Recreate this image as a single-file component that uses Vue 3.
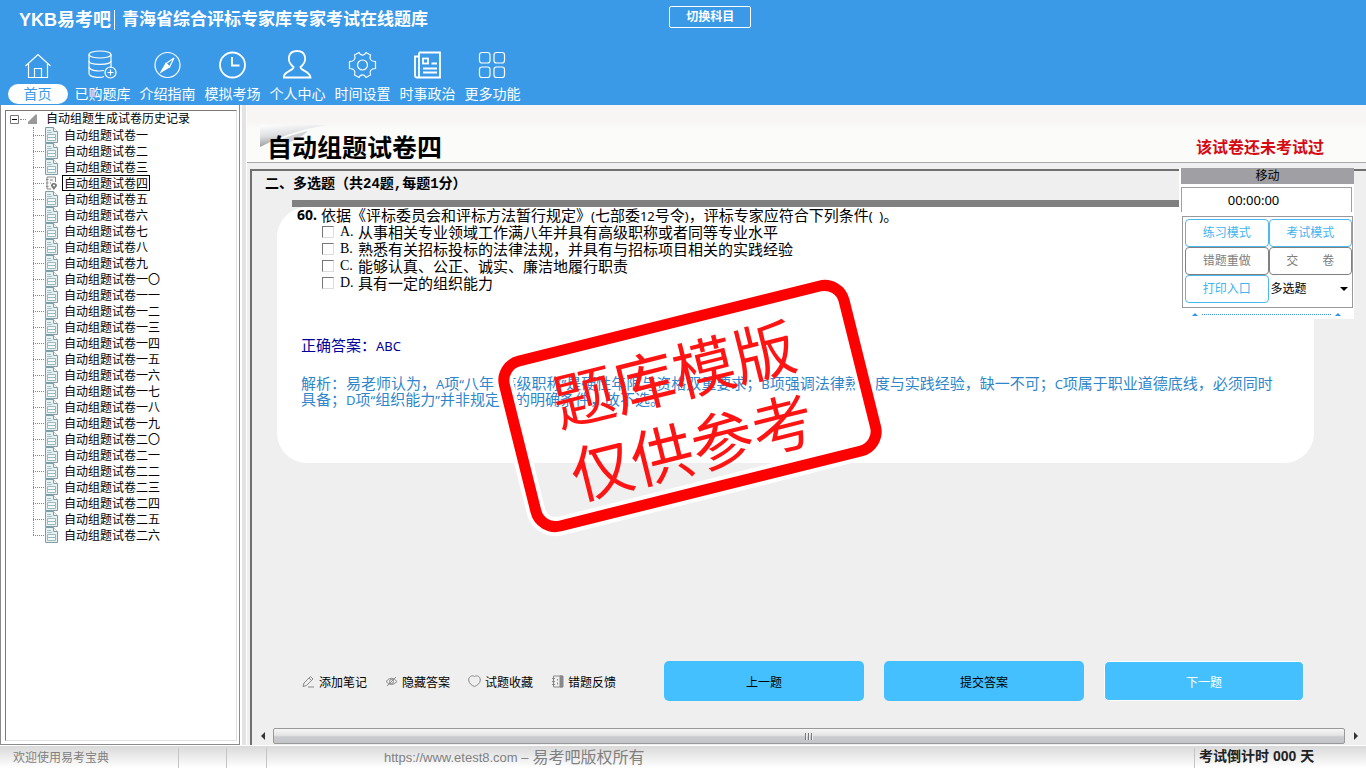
<script setup>
import { ref } from 'vue'

const navItems = [
  { id: 'home', label: '首页' },
  { id: 'bank', label: '已购题库' },
  { id: 'guide', label: '介绍指南' },
  { id: 'mock', label: '模拟考场' },
  { id: 'user', label: '个人中心' },
  { id: 'time', label: '时间设置' },
  { id: 'news', label: '时事政治' },
  { id: 'more', label: '更多功能' }
]
const activeNav = ref('home')

const numerals = [
  '一', '二', '三', '四', '五', '六', '七', '八', '九', '一〇', '一一', '一二', '一三',
  '一四', '一五', '一六', '一七', '一八', '一九', '二〇', '二一', '二二', '二三', '二四', '二五', '二六'
]
const selectedPaper = ref('四')

const options = [
  { key: 'A', text: '从事相关专业领域工作满八年并具有高级职称或者同等专业水平' },
  { key: 'B', text: '熟悉有关招标投标的法律法规，并具有与招标项目相关的实践经验' },
  { key: 'C', text: '能够认真、公正、诚实、廉洁地履行职责' },
  { key: 'D', text: '具有一定的组织能力' }
]
const checked = ref([])
const kind = ref('多选题')
</script>

<template>
  <div class="app">
    <header class="top">
      <div class="brand-row">
        <div class="brand">
          <span class="logo">YKB易考吧</span>
          <h1 class="site">青海省综合评标专家库专家考试在线题库</h1>
        </div>
        <button class="switch" type="button">切换科目</button>
      </div>
      <nav class="nav">
        <button
          v-for="n in navItems"
          :key="n.id"
          type="button"
          class="nav-item"
          :class="{ active: activeNav === n.id }"
          @click="activeNav = n.id"
        >
          <svg class="nav-icon" viewBox="0 0 30 30" width="30" height="30" aria-hidden="true">
            <g v-if="n.id === 'home'">
              <path d="M2.5 16 L15 4.500 L27.500 16" />
              <path d="M5.500 14 V27.500 H24.500 V14" />
              <path d="M11.500 27 V18.500 H18.500 V27" />
            </g>
            <g v-else-if="n.id === 'bank'">
              <ellipse cx="12" cy="4.500" rx="11" ry="3.500" />
              <path d="M1 4.500 V23 C1 28 13 28 16 26.500 M23 4.500 V18" />
              <path d="M1 11 C1 15.500 23 15.500 23 11 M1 17 C2 21 11 21.500 16 20.500" />
              <circle cx="22.500" cy="22.500" r="5.500" />
              <path d="M19.500 22.500 H25.500 M22.500 19.500 V25.500" />
            </g>
            <g v-else-if="n.id === 'guide'">
              <circle cx="14.500" cy="15" r="12.500" />
              <path d="M21 8 L16.500 17 L13 13.500 Z" />
              <path class="solid" d="M8 22 L13 13.500 L16.500 17 Z" />
            </g>
            <g v-else-if="n.id === 'mock'" class="medium">
              <circle cx="14.500" cy="15" r="12.500" />
              <path d="M14 7 V15.500 H21.500" />
            </g>
            <g v-else-if="n.id === 'user'" class="medium">
              <path d="M10.500 17 C3 11 5 1 14 1 C23 1 25 11 17.500 17 C17 20.500 27 21 27.500 27.500 H.5 C1 21 11 20.500 10.500 17 Z" />
            </g>
            <g v-else-if="n.id === 'time'">
              <path d="M11 2.500 C12.500 6 16.500 6 18 2.500 L22.500 5 C21 9 23 11.500 27.500 11.500 V18.500 C23 18.500 21 21 22.500 25 L18 27.500 C16.500 24 12.500 24 11 27.500 L6.500 25 C8 21 6 18.500 1.500 18.500 V11.500 C6 11.500 8 9 6.500 5 Z" />
              <circle cx="14.500" cy="15" r="5" />
            </g>
            <g v-else-if="n.id === 'news'" class="medium">
              <path d="M6 2.500 H27 V27.500 H4 Q2 27.500 2 25 V6.500 H6 M6 2.500 V27" />
              <rect x="10" y="8.500" width="5" height="5" />
              <path d="M18.500 13.500 H24 M10 18.500 H24 M10 22.500 H24" />
            </g>
            <g v-else>
              <rect x="1.500" y="2.500" width="10.500" height="10.500" rx="2.500" />
              <rect x="16" y="2.500" width="10.500" height="10.500" rx="2.500" />
              <rect x="1.500" y="17" width="10.500" height="10.500" rx="2.500" />
              <rect x="16" y="17" width="10.500" height="10.500" rx="2.500" />
            </g>
          </svg>
          <span class="nav-label">{{ n.label }}</span>
        </button>
      </nav>
    </header>

    <main class="body">
      <aside class="side">
        <div class="tree">
          <div class="root">
            <button class="toggle" type="button" aria-label="折叠">
              <svg viewBox="0 0 9 9" width="9" height="9"><path d="M.5 .5 H8.500 V8.500 H.5 Z" fill="#fff" stroke="#777" /><path d="M2 4.500 H7" stroke="#000" /></svg>
            </button>
            <span class="dots"></span>
            <svg class="root-icon" viewBox="0 0 10 10" width="10" height="10" aria-hidden="true"><path d="M0 8 L7 1 Q9 -1 9 2 V10 H1 Q-1 10 0 8 Z" fill="#999" /></svg>
            <span>自动组题生成试卷历史记录</span>
          </div>
          <ul class="papers">
            <li v-for="n in numerals" :key="n" class="paper">
              <svg v-if="n === '四'" class="doc" viewBox="0 0 14 16" width="14" height="16" aria-hidden="true">
                <path d="M11.500 7 V2 H3 V14 H7" fill="#f8f8f8" stroke="#888" />
                <path d="M2 4.500 H4.500 M2 8 H4.500 M2 11.500 H4.500 M6 5 H9 M6 8 H7" stroke="#888" />
                <path d="M9.800 15 L7 11 Q7 8 9.800 8 Q13 8 13 11 Z" fill="#777" />
                <circle cx="10" cy="10.500" r="1" fill="#fff" />
              </svg>
              <svg v-else class="doc" viewBox="0 0 14 16" width="14" height="16" aria-hidden="true">
                <path d="M1.500 .5 H9.500 L13.500 4.500 V15.500 H1.500 Z" fill="#e6f1f2" stroke="#7f9ea3" />
                <path d="M9.500 .5 V4.500 H13.500" fill="#fff" stroke="#7f9ea3" />
                <path d="M3 3.500 H7 M3 5.500 H8" stroke="#a3bfc3" />
                <path d="M3.500 7.500 H11.500 V13.500 H3.500 Z M3.500 10.500 H11.500" fill="#f4fafa" stroke="#9ab9be" />
              </svg>
              <button type="button" class="paper-btn" :class="{ selected: selectedPaper === n }" @click="selectedPaper = n">自动组题试卷{{ n }}</button>
            </li>
          </ul>
        </div>
      </aside>

      <section class="work">
        <div class="title-bar">
          <svg class="swoosh" viewBox="0 0 66 36" width="66" height="36" aria-hidden="true">
            <defs>
              <linearGradient id="fold" x1="0" y1="0" x2="0.300" y2="1">
                <stop offset="0" stop-color="#ffffff" />
                <stop offset="0.500" stop-color="#dcdee0" />
                <stop offset="1" stop-color="#8f9498" />
              </linearGradient>
            </defs>
            <path d="M0 0 H40 L66 0 Q30 6 0 22 Z" fill="url(#fold)" />
            <path d="M12 18 Q30 10 48 6 Q40 14 22 20 Z" fill="#d0d3d6" />
          </svg>
          <h2 class="paper-title">自动组题试卷四</h2>
          <strong class="status">该试卷还未考试过</strong>
        </div>

        <div class="frame">
          <div class="content">
            <h3 class="section">二、多选题（共24题,每题1分）</h3>
            <div class="bar"></div>
            <article class="card">
              <p class="question"><b class="no">60.</b><span>依据《评标委员会和评标方法暂行规定》<span class="latin">(</span>七部委<span class="latin">12</span>号令<span class="latin">)</span>，评标专家应符合下列条件<span class="latin">(&nbsp; )</span>。</span></p>
              <div class="options">
                <label v-for="o in options" :key="o.key" class="option">
                  <input v-model="checked" type="checkbox" :value="o.key" />
                  <span class="key">{{ o.key }}.</span>
                  <span>{{ o.text }}</span>
                </label>
              </div>
              <p class="answer">正确答案：<span class="latin">ABC</span></p>
              <p class="analysis">解析：易老师认为，<span class="latin">A</span>项<span class="latin">“</span>八年<span class="latin">+</span>高级职称<span class="latin">”</span>是硬性年限与资格双重要求；<span class="latin">B</span>项强调法律熟悉度与实践经验，缺一不可；<span class="latin">C</span>项属于职业道德底线，必须同时<br />具备；<span class="latin">D</span>项<span class="latin">“</span>组织能力<span class="latin">”</span>并非规定中的明确条件，故不选。</p>
            </article>

            <div class="actions">
              <div class="tools">
                <button type="button" class="tool">
                  <svg viewBox="0 0 13 13" width="13" height="13" aria-hidden="true"><path d="M1 11.500 L2 8 L8.500 1.500 L11 4 L4.500 10.500 Z M7 3 L9.500 5.500 M6 12 H12" /></svg>
                  添加笔记
                </button>
                <button type="button" class="tool">
                  <svg viewBox="0 0 13 13" width="13" height="13" aria-hidden="true"><path d="M1 6.500 Q6.500 0 12 6.500 Q6.500 12.500 1 6.500 Z M2 11 L11 2" /><circle cx="6.500" cy="6.500" r="2" /></svg>
                  隐藏答案
                </button>
                <button type="button" class="tool">
                  <svg viewBox="0 0 13 13" width="13" height="13" aria-hidden="true"><path d="M6.500 1.500 C9 -.2 12.300 1.500 12.300 5 C12.300 8.500 9 10.500 6.500 11.500 C4 10.500 .7 8.500 .7 5 C.7 1.500 4 -.2 6.500 1.500 Z" /></svg>
                  试题收藏
                </button>
                <button type="button" class="tool">
                  <svg viewBox="0 0 13 13" width="13" height="13" aria-hidden="true"><path d="M2.500 1 H11.500 V12 H2.500 Z M1 3.500 H4 M1 6.500 H4 M1 9.500 H4 M6.500 4 V5.500 M6.500 7.500 V9.500" /><path d="M9 1 H12 V12 H9 Z" fill="#888" /></svg>
                  错题反馈
                </button>
              </div>
              <div class="steps">
                <button type="button" class="step">上一题</button>
                <button type="button" class="step">提交答案</button>
                <button type="button" class="step next">下一题</button>
              </div>
            </div>

            <svg class="stamp" viewBox="-200 -140 400 280" width="400" height="280" role="img" aria-label="题库模版 仅供参考">
              <g transform="rotate(-14)">
                <rect x="-175" y="-85" width="350" height="170" rx="20" fill="none" stroke="#fff" stroke-width="19" />
                <rect x="-175" y="-85" width="350" height="170" rx="20" fill="none" stroke="#f00" stroke-width="11" />
                <text x="-8" y="-11" text-anchor="middle">题库模版</text>
                <text x="-8" y="64" text-anchor="middle">仅供参考</text>
              </g>
            </svg>
          </div>

          <div class="hscroll">
            <button type="button" class="arrow" aria-label="向左"><svg viewBox="0 0 6 8" width="6" height="8"><path d="M5 0 V8 L1 4 Z" fill="#333" /></svg></button>
            <div class="thumb"><i></i><i></i><i></i></div>
            <button type="button" class="arrow" aria-label="向右"><svg viewBox="0 0 6 8" width="6" height="8"><path d="M1 0 V8 L5 4 Z" fill="#333" /></svg></button>
          </div>
        </div>

        <div class="float">
          <div class="handle">移动</div>
          <div class="clock">00:00:00</div>
          <div class="modes">
            <button type="button" class="mode">练习模式</button>
            <button type="button" class="mode">考试模式</button>
            <button type="button" class="mode grey">错题重做</button>
            <button type="button" class="mode grey spread"><span>交</span><span>卷</span></button>
            <button type="button" class="mode">打印入口</button>
            <div class="kind">
              <select v-model="kind" aria-label="题型">
                <option>多选题</option>
                <option>单选题</option>
              </select>
              <svg class="caret" viewBox="0 0 8 4" width="8" height="4" aria-hidden="true"><path d="M0 0 H8 L4 4 Z" /></svg>
            </div>
          </div>
          <div class="fold-row">
            <svg viewBox="0 0 6 3" width="6" height="3"><path d="M0 3 L3 0 L6 3 Z" fill="#2f95e6" /></svg>
            <span></span>
            <svg viewBox="0 0 6 3" width="6" height="3"><path d="M0 3 L3 0 L6 3 Z" fill="#2f95e6" /></svg>
          </div>
        </div>
      </section>
    </main>

    <footer class="foot">
      <span class="cell welcome">欢迎使用易考宝典</span>
      <span class="cell"></span>
      <span class="cell"></span>
      <span class="cell copy"><span class="url">https://www.etest8.com –</span>易考吧版权所有</span>
      <strong class="cell count">考试倒计时 000 天</strong>
    </footer>
  </div>
</template>

<style>
body {
  margin: 0;
  overflow: hidden;
}
</style>

<style scoped>
.app {
  display: flex;
  flex-direction: column;
  height: 100vh;
  background: #efefef;
  color: #000;
  font-family: "Liberation Sans", "Noto Sans CJK SC", sans-serif;
  font-size: 12px;
}
.app * {
  box-sizing: border-box;
}
button,
select {
  font: inherit;
  color: inherit;
  padding: 0;
  margin: 0;
  border: 0;
  background: none;
}
h1, h2, h3, p, ul {
  margin: 0;
  padding: 0;
}

/* header */
.top {
  height: 105px;
  flex: none;
  background: #3a9ae8;
  color: #fff;
}
.brand-row {
  display: grid;
  grid-template-columns: 49% auto 1fr;
  align-items: start;
  height: 50px;
  padding-top: 6px;
}
.brand {
  display: flex;
  align-items: center;
  padding: 4px 0 0 19px;
  white-space: nowrap;
}
.logo {
  font-size: 18px;
  font-weight: 700;
  line-height: 20px;
  padding-right: 3px;
  border-right: 1px solid #fff;
}
.site {
  padding-left: 7px;
  font-size: 17px;
  font-weight: 700;
  line-height: 20px;
}
.switch {
  width: 82px;
  height: 22px;
  border: 1px solid #fff;
  border-radius: 2px;
  font-weight: 700;
  line-height: 20px;
}
.nav {
  display: flex;
  padding-left: 5px;
}
.nav-item {
  width: 65px;
  display: flex;
  flex-direction: column;
  align-items: center;
  gap: 4px;
}
.nav-icon {
  fill: none;
  stroke: #fff;
  stroke-width: 1.2;
}
.medium {
  stroke-width: 1.8;
}
.solid {
  fill: #fff;
}
.nav-label {
  font-size: 14px;
  line-height: 20px;
  white-space: nowrap;
}
.active .nav-label {
  width: 60px;
  border-radius: 10px;
  background: #fff;
  color: #3a9ae8;
}

/* tree */
.body {
  flex: 1;
  display: flex;
  min-height: 0;
}
.side {
  width: 240px;
  flex: none;
  padding: 5px 2px 3px 4px;
  background: #fff;
  border: 1px solid #8b8b8b;
  border-top: 0;
}
.tree {
  height: 100%;
  border: 1px solid #e0e0e0;
  border-top-color: #7b7b7b;
  border-left-color: #7b7b7b;
  line-height: 18px;
}
.root {
  display: flex;
  align-items: center;
  height: 16px;
  padding-left: 4px;
}
.toggle {
  display: flex;
}
.dots {
  width: 6px;
  margin: 0 2px 0 1px;
  border-top: 1px dotted #888;
}
.root-icon {
  margin-right: 8px;
}
.papers {
  list-style: none;
  margin-left: 27px;
  position: relative;
}
.papers::before {
  content: "";
  position: absolute;
  left: 0;
  top: 0;
  bottom: 8px;
  border-left: 1px dotted #888;
}
.paper {
  display: flex;
  align-items: center;
  height: 16px;
}
.paper::before {
  content: "";
  width: 11px;
  border-top: 1px dotted #888;
}
.doc {
  fill: none;
  margin-right: 4px;
}
.paper-btn {
  height: 16px;
  padding: 1px 1px 0;
  border: 1px solid transparent;
  line-height: 14px;
  white-space: nowrap;
}
.paper-btn.selected {
  border-color: #000;
}

/* workspace */
.work {
  flex: 1;
  min-width: 0;
  position: relative;
  display: flex;
  flex-direction: column;
  padding-left: 7px;
  background: linear-gradient(90deg, #fff 0 2px, #e3e3e3 2px 6px, #fff 6px 7px, #efefef 7px);
}
.title-bar {
  position: relative;
  display: flex;
  justify-content: space-between;
  align-items: center;
  height: 58px;
  padding: 29px 42px 0 20px;
  background: linear-gradient(#f7f6f5 0 17px, #fbfbf9 24px 100%);
  border-bottom: 1px solid #a9a9ab;
}
.swoosh {
  position: absolute;
  left: 13px;
  top: 20px;
}
.paper-title {
  position: relative;
  font-size: 25px;
  line-height: 28px;
  font-weight: 700;
}
.status {
  font-size: 16px;
  line-height: 26px;
  color: #d60a12;
}
.frame {
  flex: 1;
  min-height: 0;
  display: flex;
  flex-direction: column;
  margin: 6px 0 0 3px;
  border-top: 2px solid #6f6f6f;
  border-left: 2px solid #6f6f6f;
}
.content {
  flex: 1;
  position: relative;
  display: flex;
  flex-direction: column;
  padding-top: 5px;
}
.section {
  padding-left: 13px;
  font-family: "Liberation Mono", "Noto Sans CJK SC", monospace;
  font-size: 14px;
  line-height: 16px;
}
.bar {
  height: 7px;
  margin: 8px 62px 0 40px;
  background: #808080;
}
.card {
  margin: 0 52px 0 25px;
  padding: 0 20px 56px;
  border-radius: 30px;
  background: #fff;
  font-family: "Noto Sans", "Noto Sans CJK SC", sans-serif;
  font-size: 15px;
}
.latin {
  font-size: 13px;
  line-height: 12px;
}
.question {
  display: flex;
  gap: 4px;
  line-height: 16px;
}
.no {
  font-size: 14px;
}
.options {
  padding-left: 25px;
}
.option {
  display: flex;
  align-items: center;
  width: max-content;
  height: 17px;
}
.option input {
  appearance: none;
  width: 12px;
  height: 12px;
  margin: 0 6px 0 0;
  border: 1px solid #ddd;
  border-top-color: #777;
  border-left-color: #777;
  background: #fff;
}
.option input:checked {
  background: #3a9ae8;
}
.key {
  width: 18px;
  font-family: "Liberation Serif", serif;
  font-size: 14px;
}
.answer {
  margin: 46px 0 0 4px;
  line-height: 16px;
  color: #00009c;
}
.analysis {
  margin: 22px 0 0 4px;
  line-height: 16px;
  color: #2f86cb;
  white-space: nowrap;
}
.actions {
  display: flex;
  align-items: center;
  gap: 30px;
  margin: auto 62px 26px 50px;
}
.tools {
  flex: none;
  display: grid;
  grid-template-columns: repeat(4, 83px);
}
.tool {
  display: flex;
  align-items: center;
  gap: 4px;
  height: 20px;
  white-space: nowrap;
}
.tool svg {
  fill: none;
  stroke: #888;
}
.steps {
  flex: 1;
  display: grid;
  grid-template-columns: repeat(3, 1fr);
  gap: 20px;
}
.step {
  height: 40px;
  border-radius: 5px;
  background: #45c0ff;
}
.next {
  color: #fff;
  border: 1px solid #fff;
}
.stamp {
  position: absolute;
  left: 238px;
  top: 95px;
  pointer-events: none;
}
.stamp text {
  font-family: "Noto Sans CJK SC", sans-serif;
  font-size: 62px;
  fill: #ff1414;
}
.hscroll {
  display: flex;
  height: 18px;
  padding: 1px 0;
}
.arrow {
  width: 21px;
  display: flex;
  align-items: center;
  justify-content: center;
}
.thumb {
  flex: 1;
  display: flex;
  align-items: center;
  justify-content: center;
  gap: 1px;
  border: 1px solid #999;
  border-radius: 2px;
  background: linear-gradient(#f6f6f6, #e4e4e5 45%, #cbcccf 55%, #c3c4c7);
}
.thumb i {
  width: 2px;
  height: 7px;
  background: #777;
  border-right: 1px solid #eee;
}

/* floating exam panel */
.float {
  position: absolute;
  top: 63px;
  right: 12px;
  width: 175px;
  padding-left: 2px;
  background: #fff;
}
.handle {
  height: 16px;
  background: #a0a0a4;
  line-height: 16px;
  text-align: center;
}
.clock {
  height: 25px;
  margin: 3px 2px 0 0;
  padding-right: 26px;
  border: 1px solid #a0a0a0;
  border-bottom: 0;
  font-family: "Noto Sans", sans-serif;
  font-size: 13px;
  line-height: 25px;
  text-align: center;
}
.modes {
  display: grid;
  grid-template-columns: repeat(2, 1fr);
  margin: 4px 1px 0 1px;
  padding: 2px 0 4px 2px;
  border: 1px solid #999;
}
.mode {
  height: 28px;
  border: 1px solid #4bb8f0;
  border-radius: 4px;
  line-height: 24px;
  color: #3fb4ef;
}
.mode.grey {
  border-color: #808080;
  color: #808080;
}
.spread {
  display: flex;
  align-items: center;
  justify-content: center;
  gap: 24px;
}
.kind {
  position: relative;
}
.kind select {
  width: 100%;
  height: 28px;
  padding-left: 2px;
  appearance: none;
}
.caret {
  position: absolute;
  right: 4px;
  top: 12px;
  pointer-events: none;
}
.fold-row {
  display: flex;
  align-items: center;
  gap: 4px;
  height: 11px;
  padding: 1px 13px 0 11px;
}
.fold-row span {
  flex: 1;
  border-top: 1px dotted #3b9be8;
}

/* status bar */
.foot {
  flex: none;
  display: grid;
  grid-template-columns: 179px 48px 40px 1fr 171px;
  height: 23px;
  padding-top: 2px;
  border-top: 1px solid #fff;
  background: linear-gradient(#d9d9d9, #fff);
  color: #808080;
  line-height: 20px;
}
.cell {
  border-right: 1px solid #c4c4c4;
  white-space: nowrap;
}
.welcome {
  padding-left: 13px;
}
.copy {
  display: flex;
  gap: 4px;
  padding-left: 117px;
  font-size: 16px;
}
.url {
  font-size: 13px;
}
.count {
  border-right: 0;
  padding-left: 4px;
  font-size: 14px;
  line-height: 16px;
  color: #222;
}
</style>
